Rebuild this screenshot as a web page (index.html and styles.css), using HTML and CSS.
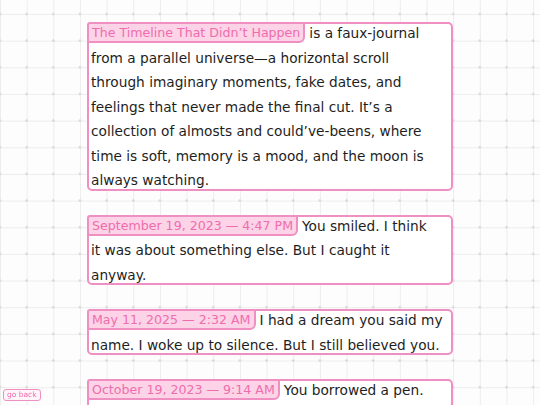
FILE: index.html
```html
<!DOCTYPE html>
<html lang="en">
<head>
<meta charset="utf-8">
<title>The Timeline That Didn’t Happen</title>
<link rel="stylesheet" href="styles.css">
</head>
<body>
<main class="timeline">
  <article class="entry">
    <p class="entry-text"><span class="stamp">The Timeline That Didn’t Happen</span>is a faux-journal from a parallel universe—a horizontal scroll through&nbsp;imaginary moments, fake dates, and feelings that never made the final cut. It’s a collection of almosts and could’ve-beens, where time is soft, memory is a mood, and the moon is always watching.</p>
  </article>
  <article class="entry">
    <p class="entry-text"><span class="stamp">September 19, 2023 — 4:47 PM</span>You smiled. I think it&nbsp;was about something else. But I caught it anyway.</p>
  </article>
  <article class="entry">
    <p class="entry-text"><span class="stamp">May 11, 2025 — 2:32 AM</span>I had a dream you said my name. I woke up to silence. But I still believed you.</p>
  </article>
  <article class="entry">
    <p class="entry-text"><span class="stamp">October 19, 2023 — 9:14 AM</span>You borrowed a pen. You never gave it back. I never asked.</p>
  </article>
</main>
<a class="go-back" href="#">go back</a>
</body>
</html>
```
FILE: styles.css
```css
html, body {
  margin: 0;
  padding: 0;
}

body {
  min-height: 100vh;
  font-family: "DejaVu Sans", "Noto Sans", sans-serif;
  color: #1e1e1e;
  background-color: #fdfdfd;
  background-image:
    radial-gradient(circle at center, #d9d9d9 0, #d9d9d9 1px, transparent 1.5px),
    linear-gradient(to right, #ededed 1px, transparent 1px),
    linear-gradient(to bottom, #ededed 1px, transparent 1px);
  background-size: 26.667px 26.667px;
  background-position: -13.333px 0.667px, 0 14px, 0 14px;
}

.timeline {
  width: 366px;
  margin: 0 auto;
  padding: 22px 0 40px;
  display: flex;
  flex-direction: column;
  gap: 24px;
}

.entry {
  background: #ffffff;
  border: 2px solid #f08fc1;
  border-radius: 5px;
  padding: 0 2px;
}

.entry-text {
  margin: -3px 0 -4px;
  font-size: 13.7px;
  line-height: 24.5px;
}

.stamp {
  float: left;
  margin: 1px 4px 0 -4px;
  padding: 0 3px;
  font-size: 12.6px;
  line-height: 17px;
  color: #ef6dad;
  background: #fdd3e7;
  border: 2px solid #f08fc1;
  border-radius: 3px 2px 6px 3px;
}

.go-back {
  position: fixed;
  left: 3px;
  bottom: 4px;
  padding: 0 3px;
  font-size: 7.5px;
  line-height: 10px;
  color: #ef6dad;
  text-decoration: none;
  background: #fff4f9;
  border: 1px solid #f08fc1;
  border-radius: 3px;
}
```
